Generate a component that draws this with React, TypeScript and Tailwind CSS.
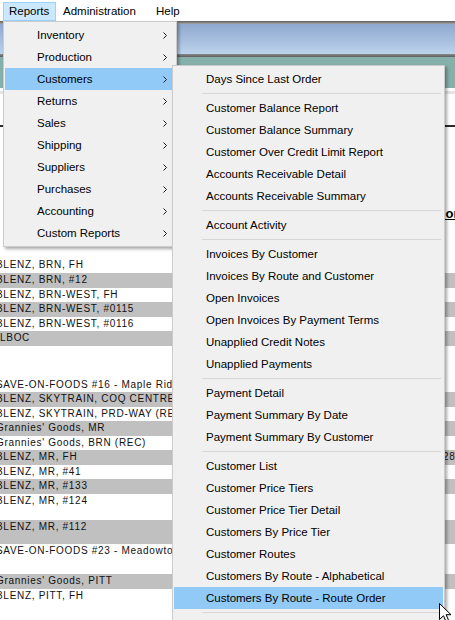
import React from "react";

type Row = { cls: string; gray: boolean; text: string; shift?: boolean; right?: string };

const rows: Row[] = [
  { cls: "h-[15px]", gray: false, text: "BLENZ, BRN, FH" },
  { cls: "h-[14.5px]", gray: true, text: "BLENZ, BRN, #12" },
  { cls: "h-[14.5px]", gray: false, text: "BLENZ, BRN-WEST, FH" },
  { cls: "h-[14.5px]", gray: true, text: "BLENZ, BRN-WEST, #0115" },
  { cls: "h-[14.5px]", gray: false, text: "BLENZ, BRN-WEST, #0116" },
  { cls: "h-[14.5px]", gray: true, text: "LBOC", shift: true },
  { cls: "h-[32px]", gray: false, text: "" },
  { cls: "h-[14.5px]", gray: false, text: "SAVE-ON-FOODS #16 - Maple Ridge" },
  { cls: "h-[14.5px]", gray: true, text: "BLENZ, SKYTRAIN, COQ CENTRE" },
  { cls: "h-[14.5px]", gray: false, text: "BLENZ, SKYTRAIN, PRD-WAY (REC)" },
  { cls: "h-[14.5px]", gray: true, text: "Grannies' Goods, MR" },
  { cls: "h-[14.5px]", gray: false, text: "Grannies' Goods, BRN (REC)" },
  { cls: "h-[14.5px]", gray: true, text: "BLENZ, MR, FH", right: "28" },
  { cls: "h-[14.5px]", gray: false, text: "BLENZ, MR, #41" },
  { cls: "h-[14.5px]", gray: true, text: "BLENZ, MR, #133" },
  { cls: "h-[26.5px]", gray: false, text: "BLENZ, MR, #124" },
  { cls: "h-[24px]", gray: true, text: "BLENZ, MR, #112" },
  { cls: "h-[30px]", gray: false, text: "SAVE-ON-FOODS #23 - Meadowtown" },
  { cls: "h-[14.5px]", gray: true, text: "Grannies' Goods, PITT" },
  { cls: "h-[14.5px]", gray: false, text: "BLENZ, PITT, FH" },
];

const leftItems = [
  "Inventory",
  "Production",
  "Customers",
  "Returns",
  "Sales",
  "Shipping",
  "Suppliers",
  "Purchases",
  "Accounting",
  "Custom Reports",
];

const subItems: string[] = [
  "Days Since Last Order",
  "-",
  "Customer Balance Report",
  "Customer Balance Summary",
  "Customer Over Credit Limit Report",
  "Accounts Receivable Detail",
  "Accounts Receivable Summary",
  "-",
  "Account Activity",
  "-",
  "Invoices By Customer",
  "Invoices By Route and Customer",
  "Open Invoices",
  "Open Invoices By Payment Terms",
  "Unapplied Credit Notes",
  "Unapplied Payments",
  "-",
  "Payment Detail",
  "Payment Summary By Date",
  "Payment Summary By Customer",
  "-",
  "Customer List",
  "Customer Price Tiers",
  "Customer Price Tier Detail",
  "Customers By Price Tier",
  "Customer Routes",
  "Customers By Route - Alphabetical",
  "Customers By Route - Route Order",
  "-",
];

function Chevron() {
  return (
    <svg width="4" height="7" viewBox="0 0 4 7" className="block">
      <path d="M0.5 0.5 L3.5 3.5 L0.5 6.5" fill="none" stroke="#1a1a1a" strokeWidth="1" />
    </svg>
  );
}

export default function App() {
  return (
    <div className="relative h-[620px] w-[455px] overflow-hidden bg-white font-['Liberation_Sans',Arial,sans-serif] text-[11.5px] text-black">
      {/* Menu bar */}
      <div className="flex h-[21px] items-start bg-white pt-[2px]">
        <div className="ml-[3px] flex h-[19px] w-[53px] items-center border border-[#99d1ff] bg-[#cce8ff] pl-[5px] pt-[1px]">
          Reports
        </div>
        <div className="flex h-[19px] w-[93px] items-center pl-[7px] pt-[1px]">Administration</div>
        <div className="flex h-[19px] items-center pl-[7px] pt-[1px]">Help</div>
      </div>

      {/* Window header bands */}
      <div className="h-[3px] bg-gradient-to-b from-[#5e5e5e] to-[#a5a5a5]" />
      <div className="h-[30px] bg-gradient-to-b from-[#8fa9cf] to-[#bcd3ec]" />
      <div className="h-[3px] bg-gradient-to-b from-[#8a8a8a] to-[#5f5f5f]" />
      <div className="h-[31px] bg-[#86b0aa]" />

      {/* Report area */}
      <div className="h-[3px] bg-white" />
      <div className="h-[3px] bg-[#e4e4e4]" />
      <div className="h-[31px] bg-white" />
      <div className="h-[2px] bg-[#2a2a2a]" />
      <div className="h-[131px] whitespace-nowrap pl-[421px] pt-[79px]">
        <span className="text-[13px] font-bold leading-[14px] underline">Report</span>
      </div>

      <div className="flex flex-col text-[10px] leading-[13px] tracking-[0.7px] text-[#111]">
        {rows.map((r, i) => (
          <div key={i} className={`${r.cls} flex items-start overflow-hidden ${r.gray ? "bg-[#c0c0c0]" : "bg-white"}`}>
            <span className={`${r.shift ? "ml-[0px] w-[443px]" : "ml-[-4px] w-[447px]"} shrink-0 whitespace-nowrap`}>
              {r.text}
            </span>
            {r.right && <span className="whitespace-nowrap">{r.right}</span>}
          </div>
        ))}
      </div>

      {/* Reports dropdown */}
      <div className="absolute left-[3px] top-[21px] w-[174px] border border-[#cccccc] bg-[#f0f0f0] px-[1px] py-[2px] shadow-[2px_2px_3px_rgba(0,0,0,0.35)]">
        {leftItems.map((item) => (
          <div
            key={item}
            className={`flex h-[22px] items-center justify-between pl-[32px] pr-[8px] ${item === "Customers" ? "bg-[#91c9f7]" : ""}`}
          >
            <span className="pt-[1px]">{item}</span>
            <Chevron />
          </div>
        ))}
      </div>

      {/* Customers submenu */}
      <div className="absolute left-[172px] top-[65px] w-[273px] border border-[#cccccc] bg-[#f0f0f0] px-[1px] pt-[2px] pb-[20px] shadow-[2px_2px_3px_rgba(0,0,0,0.35)]">
        {subItems.map((item, i) =>
          item === "-" ? (
            <div key={i} className="flex h-[7px] items-center pl-[28px] pr-[2px]">
              <div className="h-[1px] w-full bg-[#d7d7d7]" />
            </div>
          ) : (
            <div
              key={i}
              className={`flex h-[22px] items-center pl-[32px] pt-[1px] ${item === "Customers By Route - Route Order" ? "bg-[#91c9f7]" : ""}`}
            >
              {item}
            </div>
          )
        )}
      </div>

      {/* Mouse cursor */}
      <svg className="absolute left-[439px] top-[603px]" width="13" height="20" viewBox="0 0 13 20">
        <path
          d="M0.5 0.5 L0.5 16.5 L4.5 12.7 L7 18.5 L9.6 17.4 L7.1 11.7 L12 11.7 Z"
          fill="#ffffff"
          stroke="#000000"
          strokeWidth="1"
          strokeLinejoin="miter"
        />
      </svg>
    </div>
  );
}
